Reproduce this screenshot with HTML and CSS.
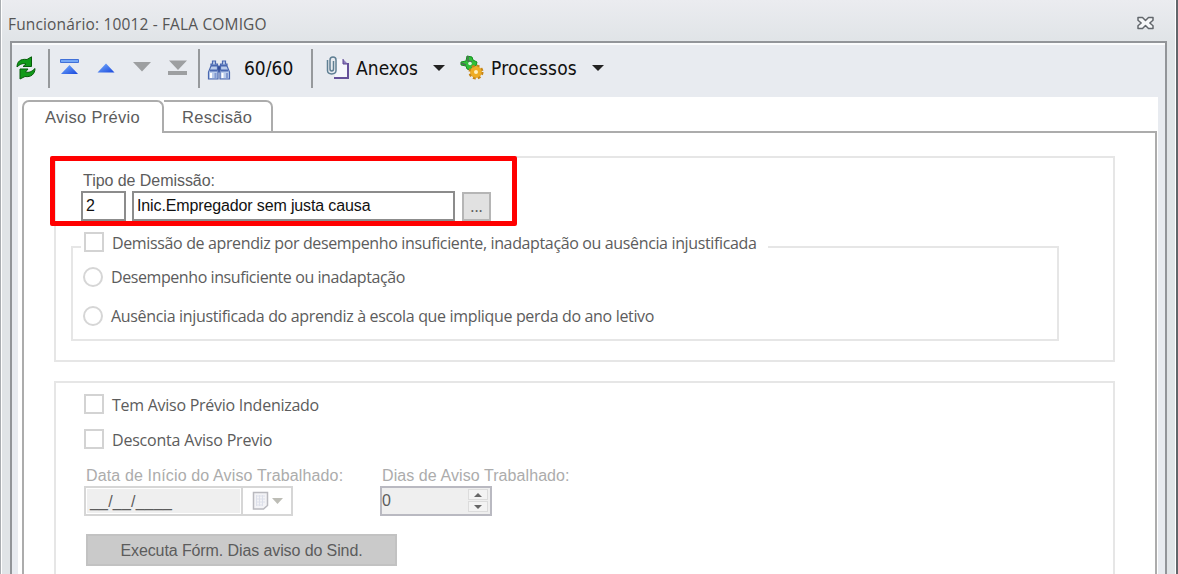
FILE: index.html
```html
<!DOCTYPE html>
<html lang="pt-BR">

<head>
    <meta charset="UTF-8">
    <title>Funcionário</title>
    <link rel="stylesheet" href="styles.css">
</head>

<body>
    <div class="window">
        <div class="titlebar">
            <span class="title">Funcionário: 10012 - FALA COMIGO</span>
            <svg class="close" width="17" height="14" viewBox="0 0 17 14">
                <path d="M1 1.500h4.500l3 3 3-3H16v2.800L12.800 7 16 9.700v2.800h-4.500l-3-3-3 3H1V9.700L4.200 7 1 4.300z" fill="#f6f7f8" stroke="#62676c" stroke-width="1.500" stroke-linejoin="round"/>
            </svg>
        </div>
        <div class="panel">
            <div class="toolbar">
                <svg class="refresh" width="20" height="24" viewBox="0 0 20 24">
                    <g fill="#109a18" stroke="#075c0b" stroke-width="1" stroke-linejoin="round">
                        <path d="M1 11C1 6 4 2.500 11 3.500L15.500 .8V10.500H7L10 8C7 7 4 8 1 11z"/>
                        <path d="M19 12.500C19 18 15 21.500 9 20.500L4 23V13H12L9.500 16C13 17 16 15.500 19 12.500z"/>
                    </g>
                </svg>
                <i class="sep sep-1"></i>
                <svg class="nav" width="130" height="18" viewBox="0 0 130 18">
                    <defs>
                        <linearGradient id="blue" x1="0" x2="1" y2="1">
                            <stop offset="0" stop-color="#7ab2ff"/>
                            <stop offset="1" stop-color="#1746dc"/>
                        </linearGradient>
                    </defs>
                    <path d="M.5 1.500h18v3H.5z" fill="#75a8f6" stroke="#4070d8"/>
                    <path d="M9.500 7L18 16H1z" fill="url(#blue)"/>
                    <path d="M46 5.500L54.500 14.500H37.500z" fill="url(#blue)"/>
                    <path d="M73 4h18l-9 9.500z" fill="#9d9fa1"/>
                    <path d="M109 2.500h18l-9 9.500zM108 13h19v4h-19z" fill="#9d9fa1"/>
                </svg>
                <i class="sep sep-2"></i>
                <svg class="find" width="24" height="22" viewBox="0 0 24 22">
                    <g fill="#b9cbea" stroke="#4a68b0" stroke-width="1.200">
                        <path d="M10 7h4v6h-4z" fill="#344b96"/>
                        <path d="M5.500 2h3v3h2v6h.5v9H1.500v-7l2.500-6V5h1.500zM15.500 2h3v3H20v2l2.500 6v7H13v-9h.5V5h2z"/>
                        <path d="M4 6.500h6M3 11.500h7M14 6.500h6M14 11.500h7" stroke-width="2"/>
                        <path d="M4 14v5M15.500 14v5" stroke="#fff" stroke-width="2"/>
                        <path d="M8.500 14v5M20 14v5" stroke="#8299d0" stroke-width="2"/>
                    </g>
                </svg>
                <span class="tool-text count">60/60</span>
                <i class="sep sep-3"></i>
                <svg class="clip" width="24" height="25" viewBox="0 0 24 25">
                    <path d="M9 4h8l5 5v14H9z" fill="#f5f6fb"/>
                    <path d="M17 4v5h5" fill="#8e7ec0" stroke="#59458e"/>
                    <path d="M22 8v15H8" fill="none" stroke="#65509a" stroke-width="2"/>
                    <path d="M1.500 5v10.500c0 4.500 8.500 4.500 8.500 0V5c0-4-6-4-6 0v9c0 2.500 3.500 2.500 3.500 0V6" fill="none" stroke="#5f7f93" stroke-width="1.500"/>
                </svg>
                <span class="tool-text anexos">Anexos</span>
                <i class="arrow"></i>
                <svg class="gears" width="24" height="25" viewBox="0 0 24 25">
                    <path d="M1 7l5-1 1-5 5 1 1 3 4 2-1 4-4 1-1 3-4-1-1-3-5-1z" fill="#2fc038" stroke="#15901f"/>
                    <path d="M8 1v5l4 1M1 8l5 2" fill="none" stroke="#4d6d56" stroke-width="1.500"/>
                    <circle cx="10" cy="8.500" r="1.800" fill="#d9f7da"/>
                    <circle cx="16" cy="17" r="4" fill="#fff0c0" stroke="#eeac24" stroke-width="4"/>
                    <circle cx="16" cy="17" r="6.500" fill="none" stroke="#c78516" stroke-width="2" stroke-dasharray="2.900 2.200"/>
                </svg>
                <span class="tool-text processos">Processos</span>
                <i class="arrow"></i>
            </div>
            <div class="content">
                <div class="tabs">
                    <div class="tab active"><span class="t-tab1">Aviso Prévio</span></div>
                    <div class="tab"><span class="t-tab2">Rescisão</span></div>
                    <div class="tab-line"></div>
                </div>
                <div class="page">
                    <div class="group group-tipo">
                        <div class="highlight"></div>
                        <div class="label tipo-label"><span>Tipo de Demissão:</span></div>
                        <div class="tipo-row">
                            <div class="input codigo">2</div>
                            <div class="input descricao"><span>Inic.Empregador sem justa causa</span></div>
                            <div class="browse">...</div>
                        </div>
                        <div class="aprendiz">
                            <div class="legend">
                                <i class="box"></i>
                                <span class="text t-aprendiz">Demissão de aprendiz por desempenho insuficiente, inadaptação ou ausência injustificada</span>
                            </div>
                            <div class="option">
                                <i class="radio"></i>
                                <span class="text t-desempenho">Desempenho insuficiente ou inadaptação</span>
                            </div>
                            <div class="option">
                                <i class="radio"></i>
                                <span class="text t-ausencia">Ausência injustificada do aprendiz à escola que implique perda do ano letivo</span>
                            </div>
                        </div>
                    </div>
                    <div class="group group-aviso">
                        <div class="check">
                            <i class="box"></i>
                            <span class="text t-indenizado">Tem Aviso Prévio Indenizado</span>
                        </div>
                        <div class="check">
                            <i class="box"></i>
                            <span class="text t-desconta">Desconta Aviso Previo</span>
                        </div>
                        <div class="fields">
                            <div class="field field-data">
                                <div class="label off"><span class="t-data">Data de Início do Aviso Trabalhado:</span></div>
                                <div class="date">
                                    <div class="mask">__/__/____</div>
                                    <div class="picker">
                                        <svg width="32" height="20" viewBox="0 0 32 20">
                                            <path d="M1.500 1.500h14v13l-4 3.500h-10z" fill="#f3f3f6" stroke="#b9b9be" stroke-width="1.500"/>
                                            <path d="M4 5h9M4 8h9M4 11h9M4 14h7M4.500 4v11M7.500 4v11M10.500 4v11" stroke="#dde0ea"/>
                                            <path d="M20 7h11l-5.500 6z" fill="#bdbdb6"/>
                                        </svg>
                                    </div>
                                </div>
                            </div>
                            <div class="field">
                                <div class="label off"><span class="t-dias">Dias de Aviso Trabalhado:</span></div>
                                <div class="spin">
                                    <span class="value">0</span>
                                    <div class="spin-buttons">
                                        <i class="up"></i>
                                        <i class="down"></i>
                                    </div>
                                </div>
                            </div>
                        </div>
                        <div class="button"><span>Executa Fórm. Dias aviso do Sind.</span></div>
                    </div>
                </div>
            </div>
        </div>
    </div>
</body>

</html>
```

FILE: styles.css
```css
* {
    box-sizing: border-box;
}

body {
    margin: 0;
    height: 574px;
    overflow: hidden;
    font-family: "Open Sans", "Noto Sans", sans-serif;
    font-size: 16px;
    color: #5c5c5c;
    white-space: nowrap;
}

i {
    flex: none;
}

svg {
    display: block;
    flex: none;
}

.window {
    height: 574px;
    padding: 0 9px 0 9px;
    border-left: 1px solid #a9adb1;
    border-right: 2px solid #62666b;
    box-shadow: inset 1px 0 #fff, inset -1px 0 #fff;
    background: linear-gradient(#ebecf0, #e0e4e7 42px);
}

.titlebar {
    display: flex;
    justify-content: space-between;
    height: 41px;
    padding: 9px 13px 0 0;
}

.title {
    margin-left: -2px;
    font-size: 15.5px;
    line-height: 30px;
    letter-spacing: 0.15px;
    color: #555;
}

.close {
    margin-top: 7px;
}

.panel {
    height: 533px;
    border: 2px solid #929599;
    border-bottom: 0;
    padding: 0 7px 0 6px;
    box-shadow: inset 0 2px #fafbfc;
    background: #e8ebf0;
}

.toolbar {
    display: flex;
    align-items: center;
    height: 54px;
}

.tool-text {
    margin-top: -4px;
    font-family: "DejaVu Sans Condensed", "DejaVu Sans", sans-serif;
    font-stretch: condensed;
    font-size: 19px;
    color: #111;
}

.sep {
    width: 2px;
    height: 39px;
    margin-top: -3px;
    background: #96999c;
}

.refresh {
    margin: -5px 0 0 -2px;
}

.sep-1 {
    margin-left: 12px;
}

.nav {
    margin: -6px 0 0 10px;
}

.sep-2 {
    margin-left: 8px;
}

.find {
    margin-left: 7px;
}

.count {
    width: 67px;
    margin-left: 13px;
}

.sep-3 {
    margin-left: 0;
}

.clip {
    margin: -5px 0 0 13px;
}

.anexos {
    width: 77px;
    margin-left: 6px;
    letter-spacing: 0.05px;
}

.arrow {
    margin-top: -4px;
    border: 6px solid transparent;
    border-top: 6px solid #222;
    border-bottom: 0;
}

.gears {
    margin: -5px 7px 0 15px;
}

.processos {
    width: 101px;
    letter-spacing: 0.2px;
}

.content {
    height: 477px;
    padding: 3px 1px 0 4px;
    background: #fff;
}

.tabs {
    display: flex;
    height: 33px;
    font-family: "Liberation Sans", Arial, sans-serif;
    font-size: 16.5px;
}

.tab {
    width: 109px;
    border: 2px solid #acacac;
    border-left: 0;
    border-radius: 0 7px 0 0;
    padding-left: 18px;
    line-height: 30px;
}

.tab.active {
    width: 142px;
    border-left: 2px solid #acacac;
    border-bottom: 0;
    border-radius: 7px 7px 0 0;
    padding-left: 21px;
}

.t-tab1 {
    letter-spacing: 0.3px;
}

.t-tab2 {
    letter-spacing: 0.3px;
}

.tab-line {
    flex: 1;
    border-bottom: 2px solid #acacac;
}

.page {
    height: 441px;
    padding: 23px 40px 0 30px;
    border: solid #acacac;
    border-width: 0 2px;
}

.group {
    position: relative;
    border: 2px solid #e6e6e6;
}

.group-tipo {
    height: 206px;
    padding: 11px 54px 0 15px;
}

.highlight {
    position: absolute;
    left: -6px;
    top: -2px;
    width: 467px;
    height: 70px;
    border: 5px solid #f00;
    border-radius: 2px;
}

.label {
    height: 22px;
    line-height: 24px;
    font-family: "Liberation Sans", Arial, sans-serif;
    font-size: 16px;
    letter-spacing: -0.05px;
}

.tipo-label {
    padding-left: 12px;
}

.tipo-row {
    display: flex;
    padding-left: 10px;
    height: 31px;
}

.input {
    height: 30px;
    border: 2px solid #8c8c8c;
    padding-left: 3px;
    font: 16px/26px "Liberation Sans", Arial, sans-serif;
    letter-spacing: -0.13px;
    color: #111;
}

.codigo {
    width: 45px;
}

.descricao {
    width: 323px;
    margin-left: 6px;
}

.browse {
    width: 29px;
    height: 29px;
    margin: 1px 0 0 7px;
    border: 2px solid #b5b5b5;
    background: #e1e1e1;
    text-align: center;
    line-height: 25px;
}

.aprendiz {
    height: 95px;
    margin-top: 24px;
    border: 2px solid #e6e6e6;
}

.legend {
    display: flex;
    align-items: center;
    width: 687px;
    height: 20px;
    margin: -16px 0 0 8px;
    padding-left: 3px;
    background: #fff;
}

.box {
    width: 20px;
    height: 20px;
    margin-right: 8px;
    border: 2px solid #d3d3d3;
    background: #fff;
}

.legend .text {
    margin-top: 1px;
}

.t-aprendiz {
    letter-spacing: -0.36px;
}

.t-desempenho {
    letter-spacing: -0.42px;
}

.t-ausencia {
    letter-spacing: -0.34px;
}

.t-indenizado {
    letter-spacing: -0.26px;
}

.t-desconta {
    letter-spacing: -0.2px;
}

.option {
    display: flex;
    align-items: center;
    height: 20px;
    margin: 15px 0 0 10px;
}

.option .text {
    margin-top: -1px;
}

.option + .option {
    margin-top: 19px;
}

.radio {
    width: 20px;
    height: 20px;
    margin-right: 8px;
    border: 2px solid #d6d6d6;
    border-radius: 50%;
    background: #fff;
}

.group-aviso {
    height: 220px;
    margin-top: 19px;
    border-bottom: 0;
    padding: 11px 0 0 28px;
}

.check {
    display: flex;
    align-items: center;
    height: 20px;
    margin-bottom: 15px;
}

.check .text {
    margin-top: 2px;
}

.fields {
    display: flex;
    height: 70px;
}

.field-data {
    width: 296px;
}

.off {
    padding-left: 2px;
    color: #acacac;
}

.t-data {
    letter-spacing: 0.14px;
}

.t-dias {
    letter-spacing: 0.08px;
}

.date {
    display: flex;
    width: 209px;
    height: 30px;
    border: 2px solid #d6d6d6;
}

.mask {
    width: 153px;
    margin: 1px;
    padding-left: 3px;
    background: #efefef;
    font: 16px/25px "Liberation Sans", Arial, sans-serif;
    letter-spacing: 0.2px;
}

.picker {
    flex: 1;
    border-left: 2px solid #d6d6d6;
    padding: 3px 0 0 9px;
}

.spin {
    display: flex;
    justify-content: space-between;
    width: 112px;
    height: 30px;
    border: 2px solid #b9b9c1;
    background: #efefef;
}

.value {
    font: 16px/25px "Liberation Sans", Arial, sans-serif;
}

.spin-buttons {
    display: flex;
    flex-direction: column;
    gap: 1px;
    width: 20px;
    margin: 1px 2px 2px 0;
}

.spin-buttons i {
    display: flex;
    flex: 1;
    align-items: center;
    justify-content: center;
    border: 1px solid #dcdcdc;
    background: #f3f3f3;
}

.spin-buttons i::after {
    content: "";
    border: 4px solid transparent;
}

.spin-buttons .up::after {
    border-top: 0;
    border-bottom-color: #666;
}

.spin-buttons .down::after {
    border-bottom: 0;
    border-top-color: #666;
}

.button {
    width: 311px;
    height: 32px;
    margin-left: 2px;
    border: 2px solid #c2c2c2;
    background: #cacaca;
    text-align: center;
    font: 16px/30px "Liberation Sans", Arial, sans-serif;
    letter-spacing: -0.1px;
}
```
